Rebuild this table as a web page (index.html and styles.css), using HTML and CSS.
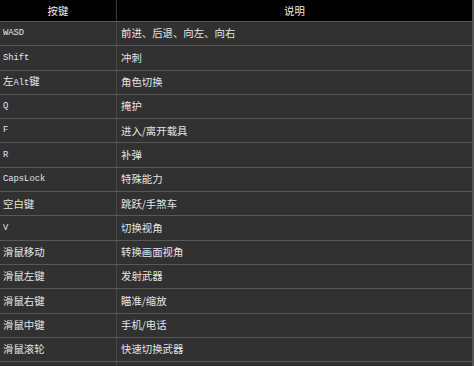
FILE: index.html
```html
<!DOCTYPE html>
<html lang="zh">
<head>
<meta charset="utf-8">
<link rel="stylesheet" href="styles.css">
</head>
<body>
<table class="keys">
  <thead>
    <tr><th class="c1">按键</th><th class="c2">说明</th></tr>
  </thead>
  <tbody>
    <tr><td class="c1 mono">WASD</td><td class="c2">前进、后退、向左、向右</td></tr>
    <tr><td class="c1 mono">Shift</td><td class="c2">冲刺</td></tr>
    <tr><td class="c1">左<span class="mono">Alt</span>键</td><td class="c2">角色切换</td></tr>
    <tr><td class="c1 mono">Q</td><td class="c2">掩护</td></tr>
    <tr><td class="c1 mono">F</td><td class="c2">进入/离开载具</td></tr>
    <tr><td class="c1 mono">R</td><td class="c2">补弹</td></tr>
    <tr><td class="c1 mono">CapsLock</td><td class="c2">特殊能力</td></tr>
    <tr><td class="c1">空白键</td><td class="c2">跳跃/手煞车</td></tr>
    <tr><td class="c1 mono">V</td><td class="c2">切换视角</td></tr>
    <tr><td class="c1">滑鼠移动</td><td class="c2">转换画面视角</td></tr>
    <tr><td class="c1">滑鼠左键</td><td class="c2">发射武器</td></tr>
    <tr><td class="c1">滑鼠右键</td><td class="c2">瞄准/缩放</td></tr>
    <tr><td class="c1">滑鼠中键</td><td class="c2">手机/电话</td></tr>
    <tr><td class="c1">滑鼠滚轮</td><td class="c2">快速切换武器</td></tr>
    <tr><td class="c1"></td><td class="c2"></td></tr>
  </tbody>
</table>
</body>
</html>
```
FILE: styles.css
```css
html, body {
  margin: 0;
  padding: 0;
  background: #2f2f2f;
  overflow: hidden;
}
.keys {
  width: 474px;
  border-collapse: collapse;
  table-layout: fixed;
  font-family: "Noto Sans CJK SC", "Noto Sans", sans-serif;
  font-size: 10.4px;
  color: #e4e4e4;
  border-right: 2px solid #555;
}
.keys th {
  background: #000;
  height: 21px;
  padding: 0;
  font-weight: normal;
  text-align: center;
  color: #ececec;
  border-bottom: 1px solid #5a5a5a;
}
.keys th.c1 { width: 116px; border-right: 1px solid #3a3a3a; }
.keys td {
  background: #313131;
  height: 23.3px;
  padding: 0 0 0 3px;
  border-bottom: 1px solid #585858;
  vertical-align: middle;
  white-space: nowrap;
  line-height: 1;
}
.keys td.c2 {
  padding-left: 4px;
  border-left: 1px solid #474747;
}
.mono {
  font-family: "Liberation Mono", "DejaVu Sans Mono", monospace;
  font-size: 8.8px;
  color: #e6e6e6;
}
```
